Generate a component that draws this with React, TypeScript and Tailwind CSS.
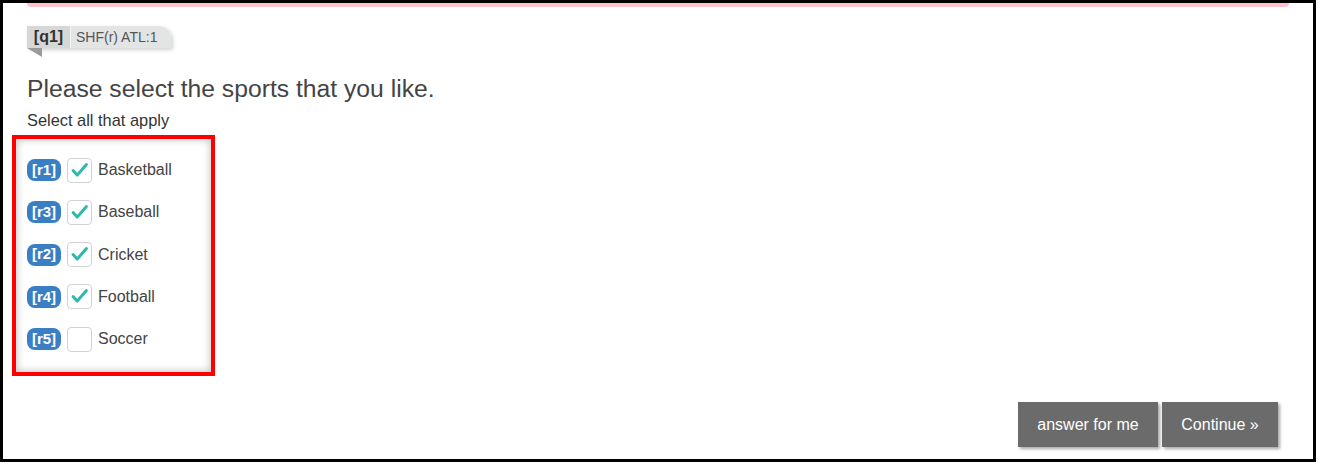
import React from "react";

const rows = [
  { code: "r1", label: "Basketball", checked: true },
  { code: "r3", label: "Baseball", checked: true },
  { code: "r2", label: "Cricket", checked: true },
  { code: "r4", label: "Football", checked: true },
  { code: "r5", label: "Soccer", checked: false },
];

export default function App() {
  return (
    <div className="w-[1316px] h-[462px] border-[3px] border-black bg-white flex flex-col font-['Liberation_Sans',Arial,sans-serif] text-[#444]">
      <div className="mx-[24px] h-[4px] bg-[#ffc2cc] rounded-b-[4px] shrink-0" />
      <div className="pl-[24px] pt-[19px]">
        <div className="flex h-[22px] w-fit shadow-[2px_2px_4px_rgba(0,0,0,0.18)] rounded-tr-[12px]">
          <div className="w-[43px] bg-[#d6d8d8] text-[16px] font-bold text-[#333] flex items-center justify-center">
            [q1]
          </div>
          <div className="w-[1px] bg-[#f4f4f4]" />
          <div className="w-[100px] bg-[#e3e5e5] text-[14px] text-[#555] rounded-tr-[12px] pl-[5px] flex items-center">
            SHF(r) ATL:1
          </div>
        </div>
        <svg width="15" height="9" className="block">
          <polygon points="0,0 15,0 15,9" fill="#9a9a9a" />
        </svg>
      </div>
      <div className="pl-[24px] mt-[17px] text-[24.7px] leading-[29px] text-[#444]">
        Please select the sports that you like.
      </div>
      <div className="pl-[24px] mt-[8px] text-[16.4px] leading-[19px] text-[#333]">
        Select all that apply
      </div>
      <div className="ml-[9px] mt-[5px] w-[203px] h-[241px] border-[4px] border-[#ff0000] shadow-[inset_0_0_8px_rgba(0,0,0,0.28)] pl-[11px] pt-[10px] flex flex-col">
        {rows.map((r) => (
          <div key={r.code} className="h-[42.25px] flex items-center shrink-0">
            <div className="w-[34px] h-[22px] rounded-[8px] bg-[#3a7fc4] text-white text-[15px] font-bold flex items-center justify-center">
              [{r.code}]
            </div>
            <div className="ml-[6px] w-[25px] h-[25px] rounded-[4px] border border-[#d2d2d2] bg-white flex items-center justify-center">
              {r.checked && (
                <svg width="25" height="25" viewBox="0 0 25 25">
                  <path d="M5.5 12.5 L10 17.5 L20 6" fill="none" stroke="#2bb8ad" strokeWidth="3.2" strokeLinecap="round" strokeLinejoin="round" />
                </svg>
              )}
            </div>
            <span className="ml-[6px] text-[16px] text-[#444]">{r.label}</span>
          </div>
        ))}
      </div>
      <div className="mt-auto flex justify-end gap-[4px] pr-[35px] pb-[12px]">
        <button className="w-[140px] h-[45px] bg-[#6b6b6b] text-white text-[16px] shadow-[2px_2px_3px_rgba(0,0,0,0.35)]">
          answer for me
        </button>
        <button className="w-[116px] h-[45px] bg-[#6b6b6b] text-white text-[16px] shadow-[2px_2px_3px_rgba(0,0,0,0.35)]">
          Continue »
        </button>
      </div>
    </div>
  );
}
